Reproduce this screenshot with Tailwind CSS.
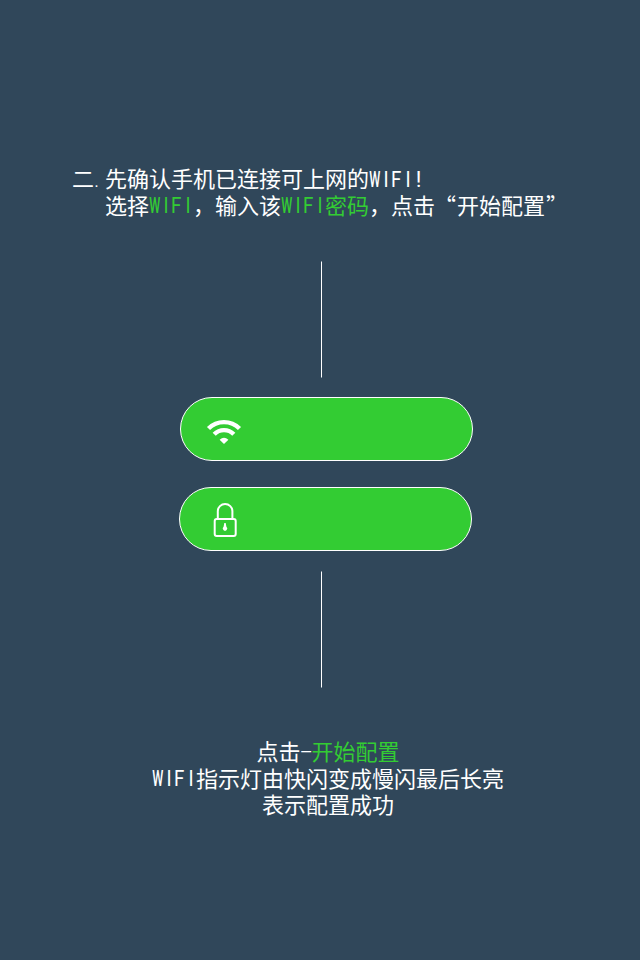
<!DOCTYPE html>
<html lang="zh-CN">
<head>
<meta charset="utf-8">
<title>WIFI配置</title>
<script src="https://cdn.jsdelivr.net/npm/@tailwindcss/browser@4"></script>
</head>
<body class="bg-[#30475a]">
<main class="flex h-[960px] w-[640px] flex-col overflow-hidden bg-[#30475a] pt-[164px] font-['Noto_Sans_CJK_SC',sans-serif] text-[22px] leading-[26.5px] whitespace-nowrap text-white">
  <section class="flex h-[53px] pl-[72px]">
    <div class="flex w-[33px]"><span>二</span><span class="w-[11px] translate-y-[3px] font-['Roboto',sans-serif] font-light">.</span></div>
    <div>
      <p class="flex"><span>先确认手机已连接可上网的</span><span class="inline-flex translate-y-[3px] font-['Roboto',sans-serif]"><span class="flex w-[11px] justify-center"><span class="scale-x-[.57] font-medium">W</span></span><span class="flex w-[11px] justify-center"><span class="scale-x-[.85]">I</span></span><span class="flex w-[11px] justify-center"><span class="scale-x-[.85]">F</span></span><span class="flex w-[11px] justify-center"><span class="scale-x-[.85]">I</span></span><span class="w-[11px] text-center">!</span></span></p>
      <p class="flex"><span>选择</span><span class="inline-flex translate-y-[2px] font-['Roboto',sans-serif] text-[#33cc33]"><span class="flex w-[11px] justify-center"><span class="scale-x-[.57] font-medium">W</span></span><span class="flex w-[11px] justify-center"><span class="scale-x-[.85]">I</span></span><span class="flex w-[11px] justify-center"><span class="scale-x-[.85]">F</span></span><span class="flex w-[11px] justify-center"><span class="scale-x-[.85]">I</span></span></span><span>，输入该</span><span class="inline-flex translate-y-[2px] font-['Roboto',sans-serif] text-[#33cc33]"><span class="flex w-[11px] justify-center"><span class="scale-x-[.57] font-medium">W</span></span><span class="flex w-[11px] justify-center"><span class="scale-x-[.85]">I</span></span><span class="flex w-[11px] justify-center"><span class="scale-x-[.85]">F</span></span><span class="flex w-[11px] justify-center"><span class="scale-x-[.85]">I</span></span></span><span class="text-[#33cc33]">密码</span><span>，点击</span><span class="w-[22px] -translate-x-px text-right">“</span><span>开始配置</span><span class="w-[22px] translate-x-px">”</span></p>
    </div>
  </section>

  <div class="mt-11 ml-[321px] h-[117px] w-px shrink-0 border-y border-white/50 bg-white bg-clip-padding"></div>

  <div class="mt-[19px] ml-[180px] flex h-16 w-[293px] shrink-0 items-center rounded-full border border-white bg-[#33cc33] pl-[25px]">
    <svg class="mt-[4px] h-[26px] w-9" viewBox="206 418 36 26" fill="none" stroke="#fff">
      <path d="M208.5 428.5A22 22 0 0 1 239.5 428.5" stroke-width="4.4"/>
      <path d="M214.2 434.2A13.9 13.9 0 0 1 233.8 434.2" stroke-width="4.4"/>
      <path d="M224 443.9L219.6 439.7Q224 435.6 228.4 439.7Z" fill="#fff" stroke="none"/>
    </svg>
  </div>

  <div class="mt-[26px] ml-[179px] flex h-16 w-[293px] shrink-0 items-center rounded-full border border-white bg-[#33cc33] pl-8">
    <svg class="mt-[2px] h-9 w-[26px]" viewBox="212 502 26 36" fill="none" stroke="#fff" stroke-width="2">
      <rect x="214.7" y="518.9" width="21" height="17.2" rx="2"/>
      <path d="M217.8 519V511.3a7.3 7.3 0 0 1 14.6 0V519"/>
      <path d="M224.3 523h1.4l.7 3.8a2.2 2.2 0 1 1-2.8 0z" fill="#fff" stroke="none"/>
    </svg>
  </div>

  <div class="mt-5 ml-[321px] h-[117px] w-px shrink-0 border-y border-white/50 bg-white bg-clip-padding"></div>

  <section class="mt-[49px] ml-[152px] flex w-[352px] flex-col items-center">
    <p class="flex"><span>点击</span><span class="flex w-[11px] justify-center"><span class="translate-y-[2px] scale-x-[1.9] font-['Roboto',sans-serif] font-light">-</span></span><span class="text-[#33cc33]">开始配置</span></p>
    <p class="flex"><span class="inline-flex translate-y-[2px] font-['Roboto',sans-serif]"><span class="flex w-[11px] justify-center"><span class="scale-x-[.57] font-medium">W</span></span><span class="flex w-[11px] justify-center"><span class="scale-x-[.85]">I</span></span><span class="flex w-[11px] justify-center"><span class="scale-x-[.85]">F</span></span><span class="flex w-[11px] justify-center"><span class="scale-x-[.85]">I</span></span></span><span>指示灯由快闪变成慢闪最后长亮</span></p>
    <p>表示配置成功</p>
  </section>
</main>
</body>
</html>
